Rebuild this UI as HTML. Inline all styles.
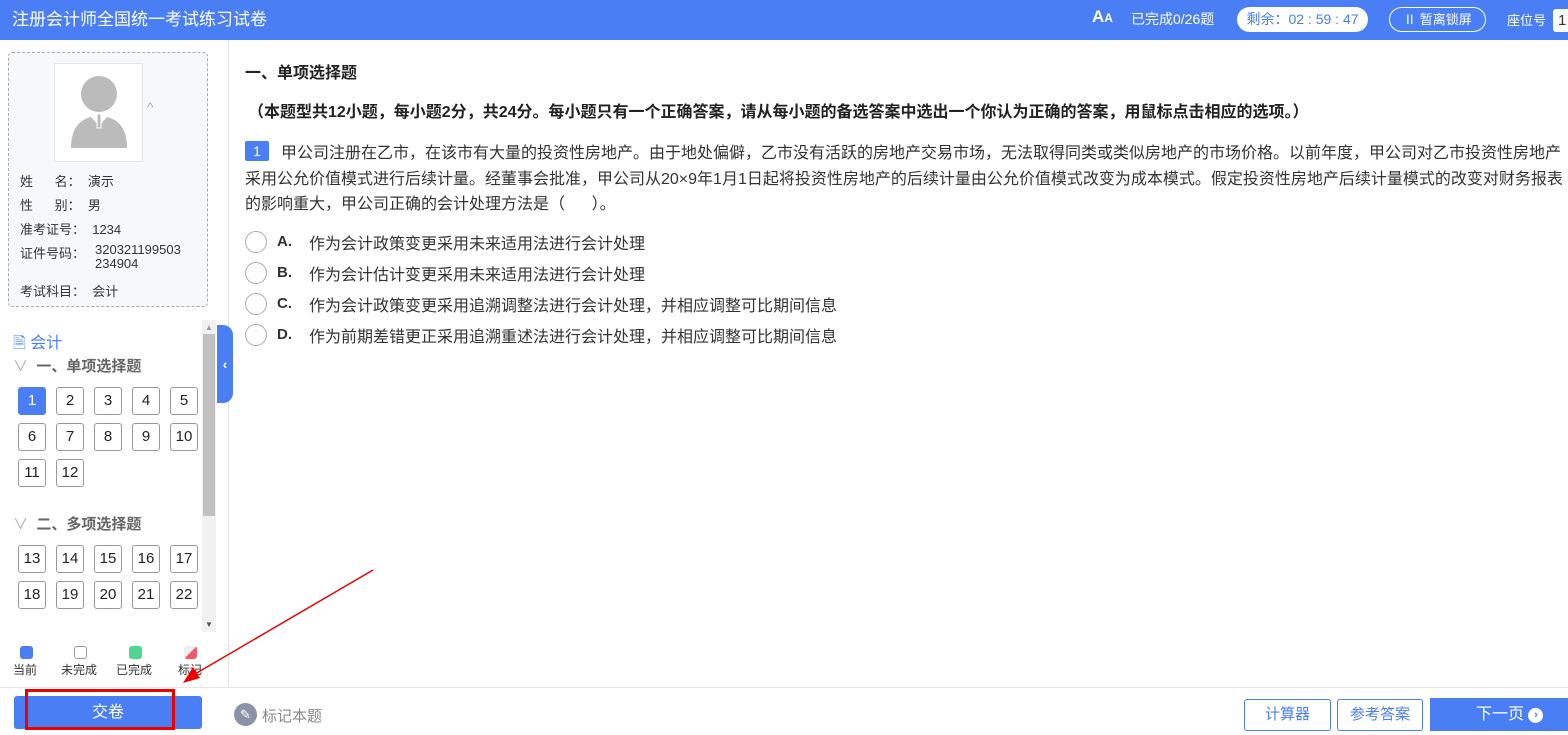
<!DOCTYPE html>
<html><head><meta charset="utf-8"><style>
*{margin:0;padding:0;box-sizing:border-box}
body{width:1568px;height:735px;overflow:hidden;position:relative;background:#fff;font-family:"Liberation Sans","Noto Sans CJK SC",sans-serif;color:#333}
.hdr{position:absolute;left:0;top:0;width:1568px;height:40px;background:#4a7ef5;color:#fff}
.abs{position:absolute;white-space:nowrap}
.left{position:absolute;left:0;top:40px;width:229px;height:647px;background:#fff;border-right:1px solid #e4e4e4}
.card{position:absolute;left:8px;top:12px;width:200px;height:255px;border:1px dashed #aaa;border-radius:4px;background:#f7f8fa}
.info{position:absolute;left:11px;font-size:13px;color:#333}
.nb{position:absolute;width:28px;height:28px;border:1px solid #999;border-radius:3px;font-size:15px;text-align:center;line-height:26px;color:#222;background:#fff}
.nb.cur{background:#4a7ef5;border-color:#4a7ef5;color:#fff}
.q{position:absolute;left:245px;font-size:16px;color:#333;white-space:nowrap}
.opt{position:absolute;left:245px;font-size:16px;color:#333;white-space:nowrap;height:20px}
.opt .c{position:absolute;left:0;top:-2px;width:22px;height:22px;border:1px solid #aaa;border-radius:50%}
.opt b{position:absolute;left:32px;top:0;font-weight:bold;font-size:15px}
.opt span{position:absolute;left:64px;top:-3px}
</style></head><body>
<div class="hdr">
<div class="abs" style="left:12px;top:5px;font-size:17px">注册会计师全国统一考试练习试卷</div>
<div class="abs" style="left:1092px;top:7px;font-size:17px;font-weight:bold">A<span style="font-size:12px">A</span></div>
<div class="abs" style="left:1131px;top:9px;font-size:14px">已完成0/26题</div>
<div class="abs" style="left:1237px;top:7px;width:131px;height:25px;background:#fff;border-radius:13px;color:#4a7ef5;font-size:14px;line-height:25px;text-align:center">剩余：02 : 59 : 47</div>
<div class="abs" style="left:1389px;top:7px;width:97px;height:25px;border:1px solid #fff;border-radius:13px;font-size:13px;line-height:23px;text-align:center">Ⅱ 暂离锁屏</div>
<div class="abs" style="left:1507px;top:10px;font-size:13px">座位号</div>
<div class="abs" style="left:1553px;top:9px;width:20px;height:23px;background:#fff;border-radius:3px;color:#333;font-size:15px;line-height:23px;padding-left:5px">1</div>
</div>
<div class="left">
<div class="card">
<div class="abs" style="left:45px;top:10px;width:89px;height:99px;background:#fff;border:1px solid #e6e6e6">
<svg width="89" height="99" viewBox="0 0 89 99"><circle cx="44" cy="30" r="18" fill="#bbb"/><path d="M16 84 Q16 58 36 53 L44 62 L52 53 Q72 58 72 84Z" fill="#bbb"/><rect x="42" y="50" width="4" height="14" fill="#bbb" stroke="#fff" stroke-width="1"/></svg></div>
<div class="abs" style="left:138px;top:46px;color:#aaa;font-size:14px">^</div>
<div class="info" style="top:118px">姓&nbsp;&nbsp;&nbsp;&nbsp;&nbsp;&nbsp;名：&nbsp;&nbsp;演示</div>
<div class="info" style="top:142px">性&nbsp;&nbsp;&nbsp;&nbsp;&nbsp;&nbsp;别：&nbsp;&nbsp;男</div>
<div class="info" style="top:166px">准考证号：&nbsp;&nbsp;1234</div>
<div class="info" style="top:190px">证件号码：</div>
<div class="info" style="left:86px;top:190px;line-height:14px">320321199503<br>234904</div>
<div class="info" style="top:228px">考试科目：&nbsp;&nbsp;会计</div>
</div>
<div class="abs" style="left:13px;top:289px;color:#4a7ef5;font-size:16px">🗎 会计</div>
<div class="abs" style="left:13px;top:315px;color:#666;font-size:15px;font-weight:bold"><span style="color:#aaa;font-weight:normal">∨</span>&nbsp; 一、单项选择题</div>
<div class="abs" style="left:13px;top:473px;color:#666;font-size:15px;font-weight:bold"><span style="color:#aaa;font-weight:normal">∨</span>&nbsp; 二、多项选择题</div>
<div class="abs" style="left:202px;top:280px;width:14px;height:312px;background:#f1f1f1"></div>
<div class="abs" style="left:203px;top:294px;width:12px;height:182px;background:#c1c1c1"></div>
<div class="abs" style="left:205px;top:283px;font-size:8px;color:#999">▲</div>
<div class="abs" style="left:205px;top:580px;font-size:8px;color:#555">▼</div>
<div class="abs" style="left:20px;top:606px;width:13px;height:13px;background:#4a7ef5;border-radius:3px"></div>
<div class="abs" style="left:74px;top:606px;width:13px;height:13px;border:1px solid #999;border-radius:3px"></div>
<div class="abs" style="left:129px;top:606px;width:13px;height:13px;background:#4cd68f;border-radius:3px"></div>
<div class="abs" style="left:184px;top:606px;width:13px;height:13px;border-radius:3px;background:linear-gradient(135deg,#eee 50%,#f05a6a 50%)"></div>
<div class="abs" style="left:13px;top:621px;font-size:12px">当前</div>
<div class="abs" style="left:61px;top:621px;font-size:12px">未完成</div>
<div class="abs" style="left:116px;top:621px;font-size:12px">已完成</div>
<div class="abs" style="left:178px;top:621px;font-size:12px">标记</div>
</div>
<div class="nb cur" style="left:18px;top:387px">1</div><div class="nb" style="left:56px;top:387px">2</div><div class="nb" style="left:94px;top:387px">3</div><div class="nb" style="left:132px;top:387px">4</div><div class="nb" style="left:170px;top:387px">5</div>
<div class="nb" style="left:18px;top:423px">6</div><div class="nb" style="left:56px;top:423px">7</div><div class="nb" style="left:94px;top:423px">8</div><div class="nb" style="left:132px;top:423px">9</div><div class="nb" style="left:170px;top:423px">10</div>
<div class="nb" style="left:18px;top:459px">11</div><div class="nb" style="left:56px;top:459px">12</div>
<div class="nb" style="left:18px;top:545px">13</div><div class="nb" style="left:56px;top:545px">14</div><div class="nb" style="left:94px;top:545px">15</div><div class="nb" style="left:132px;top:545px">16</div><div class="nb" style="left:170px;top:545px">17</div>
<div class="nb" style="left:18px;top:581px">18</div><div class="nb" style="left:56px;top:581px">19</div><div class="nb" style="left:94px;top:581px">20</div><div class="nb" style="left:132px;top:581px">21</div><div class="nb" style="left:170px;top:581px">22</div>
<div class="abs" style="left:217px;top:325px;width:16px;height:78px;background:#4a7ef5;border-radius:0 10px 10px 0;color:#fff;font-size:14px;line-height:78px;text-align:center;font-weight:bold">‹</div>
<div class="abs" style="left:245px;top:59px;font-size:16px;font-weight:bold;color:#222">一、单项选择题</div>
<div class="abs" style="left:248px;top:98px;font-size:16px;font-weight:bold;color:#222">（本题型共12小题，每小题2分，共24分。每小题只有一个正确答案，请从每小题的备选答案中选出一个你认为正确的答案，用鼠标点击相应的选项。）</div>
<div class="abs" style="left:245px;top:141px;width:24px;height:20px;background:#4a7ef5;color:#fff;font-size:14px;text-align:center;line-height:20px;border-radius:2px">1</div>
<div class="q" style="top:139px;left:281px">甲公司注册在乙市，在该市有大量的投资性房地产。由于地处偏僻，乙市没有活跃的房地产交易市场，无法取得同类或类似房地产的市场价格。以前年度，甲公司对乙市投资性房地产</div>
<div class="q" style="top:165px">采用公允价值模式进行后续计量。经董事会批准，甲公司从20×9年1月1日起将投资性房地产的后续计量由公允价值模式改变为成本模式。假定投资性房地产后续计量模式的改变对财务报表</div>
<div class="q" style="top:190px">的影响重大，甲公司正确的会计处理方法是（&nbsp;&nbsp;&nbsp;&nbsp;&nbsp;&nbsp;）。</div>
<div class="opt" style="top:233px"><i class="c"></i><b>A.</b><span>作为会计政策变更采用未来适用法进行会计处理</span></div>
<div class="opt" style="top:264px"><i class="c"></i><b>B.</b><span>作为会计估计变更采用未来适用法进行会计处理</span></div>
<div class="opt" style="top:295px"><i class="c"></i><b>C.</b><span>作为会计政策变更采用追溯调整法进行会计处理，并相应调整可比期间信息</span></div>
<div class="opt" style="top:326px"><i class="c"></i><b>D.</b><span>作为前期差错更正采用追溯重述法进行会计处理，并相应调整可比期间信息</span></div>
<div class="abs" style="left:0;top:687px;width:1568px;height:48px;border-top:1px solid #e6e6e6;background:#fff"></div>
<div class="abs" style="left:14px;top:696px;width:188px;height:33px;background:#4a7ef5;border-radius:3px;color:#fff;font-size:16px;text-align:center;line-height:33px">交卷</div>
<div class="abs" style="left:25px;top:689px;width:150px;height:41px;border:3px solid #e00"></div>
<div class="abs" style="left:234px;top:703px;width:23px;height:23px;background:#8a93a8;border-radius:50%;color:#fff;font-size:13px;text-align:center;line-height:23px">✎</div>
<div class="abs" style="left:262px;top:705px;font-size:15px;color:#888">标记本题</div>
<div class="abs" style="left:1244px;top:699px;width:87px;height:32px;border:1px solid #4a7ef5;border-radius:3px;color:#4a7ef5;font-size:15px;text-align:center;line-height:30px">计算器</div>
<div class="abs" style="left:1337px;top:699px;width:86px;height:32px;border:1px solid #4a7ef5;border-radius:3px;color:#4a7ef5;font-size:15px;text-align:center;line-height:30px">参考答案</div>
<div class="abs" style="left:1430px;top:698px;width:140px;height:33px;background:#4a7ef5;color:#fff;font-size:16px;line-height:33px;padding-left:46px">下一页 <span style="display:inline-block;width:15px;height:15px;background:#fff;border-radius:50%;color:#4a7ef5;font-size:11px;line-height:15px;text-align:center;font-weight:bold;vertical-align:1px">›</span></div>
<svg class="abs" style="left:0;top:0" width="1568" height="735"><line x1="373" y1="570" x2="195" y2="674" stroke="#e00" stroke-width="1.5"/><polygon points="183,683 193,667 200,678" fill="#e00"/></svg>
</body></html>
